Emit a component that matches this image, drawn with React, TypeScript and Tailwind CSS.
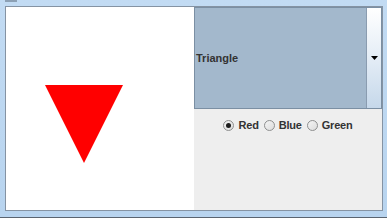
function Radio({ label, checked }: { label: string; checked?: boolean }) {
  return (
    <label className="flex items-center gap-[4px]">
      <span className="w-[11px] h-[11px] rounded-full border border-[#8e8f8f] bg-gradient-to-br from-[#f4f4f4] to-[#dcdcdc] flex items-center justify-center">
        {checked && <span className="w-[5px] h-[5px] rounded-full bg-[#1c1c1c]" />}
      </span>
      <span>{label}</span>
    </label>
  );
}

export default function App() {
  return (
    <div className="w-[387px] h-[218px] bg-gradient-to-b from-[#c2dbf3] to-[#b8d4ef] pt-[6px] pl-[5px] pr-[4px] pb-[6px] flex flex-col relative overflow-hidden border-b border-[#5a6470]">
      <div className="absolute left-[5px] top-0 w-[12px] h-[2px] bg-[#8ca0b4]" />
      <div className="flex-1 flex border border-[#8593a3] bg-white">
        <div className="w-[188px] bg-white flex items-center">
          <svg width="188" height="203" viewBox="0 0 188 203" className="block">
            <polygon points="39,78 117,78 78,156" fill="#ff0000" />
          </svg>
        </div>
        <div className="flex-1 flex flex-col bg-[#eeeeee]">
          <div className="h-[102px] flex border border-[#7b8fa3] bg-[#a3b8cc]">
            <div className="flex-1 flex items-center pl-[1px] text-[11px] font-bold text-[#333333] font-['Liberation_Sans',sans-serif]">
              Triangle
            </div>
            <div className="w-[15px] border-l border-[#8a9cb0] bg-gradient-to-b from-[#ffffff] via-[#e4edf6] to-[#c6d8ea] flex items-center justify-center">
              <svg width="7" height="4" viewBox="0 0 7 4">
                <polygon points="0,0 7,0 3.5,4" fill="#000" />
              </svg>
            </div>
          </div>
          <div className="flex justify-center gap-[5px] pt-[8px] text-[11px] font-bold text-[#333333] font-['Liberation_Sans',sans-serif] tracking-[-0.2px]">
            <Radio label="Red" checked />
            <Radio label="Blue" />
            <Radio label="Green" />
          </div>
        </div>
      </div>
    </div>
  );
}
